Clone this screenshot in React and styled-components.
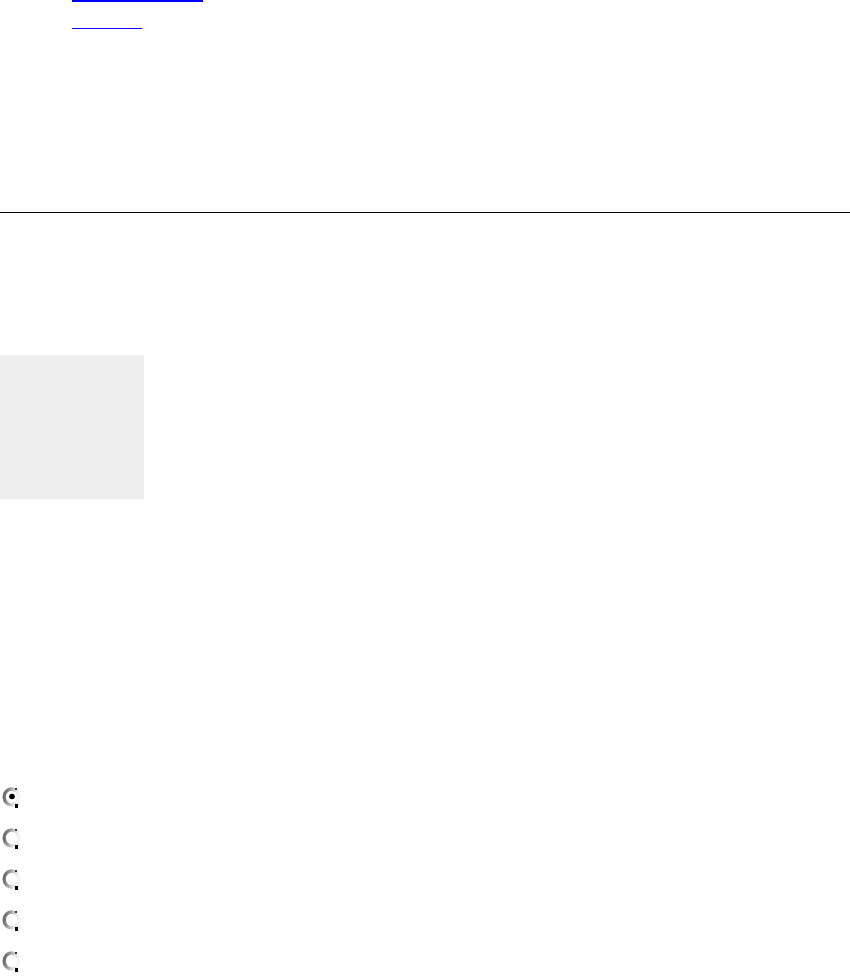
import React from 'react';
import styled, { createGlobalStyle } from 'styled-components';

const GlobalStyle = createGlobalStyle`
    html, body {
        margin: 0;
        padding: 0;
        background: #ffffff;
        font-family: "Liberation Serif", serif;
    }
`;

const Page = styled.div`
    width: 850px;
    height: 976px;
    overflow: hidden;
    display: flex;
    flex-direction: column;
`;

const Nav = styled.nav`
    display: flex;
    flex-direction: column;
    align-items: flex-start;
    gap: 26px;
    padding-left: 72px;
`;

const NavLink = styled.a`
    display: block;
    width: ${({ w }) => w}px;
    height: 0;
    border-bottom: ${({ thick }) => thick}px solid #0000ff;
    color: transparent;
`;

const Rule = styled.hr`
    margin: 183px 0 0;
    border: none;
    height: 1px;
    background: #000000;
    width: 100%;
`;

const Panel = styled.div`
    margin-top: 142px;
    width: 144px;
    height: 144px;
    background: #eeeeee;
`;

const RadioList = styled.div`
    margin-top: 289px;
    display: flex;
    flex-direction: column;
    gap: 23px;
    padding-left: 0;
`;

const RadioRow = styled.label`
    display: flex;
    align-items: center;
    height: 18px;
`;

const Radio = ({ checked }) => (
    <svg width="24" height="24" viewBox="0 0 24 24">
        <defs>
            <linearGradient id="rg" x1="0" y1="0" x2="1" y2="0.25">
                <stop offset="0" stopColor="#5e5e5e" />
                <stop offset="0.4" stopColor="#9a9a9a" />
                <stop offset="0.75" stopColor="#dcdcdc" />
                <stop offset="1" stopColor="#f4f4f4" />
            </linearGradient>
        </defs>
        <ellipse cx="11.5" cy="12" rx="7.3" ry="8" fill="#fff" stroke="url(#rg)" strokeWidth="3.4" />
        <rect x="15" y="3" width="2" height="2" fill="#333" />
        <rect x="15" y="19" width="3" height="4" fill="#000" />
        {checked && <circle cx="12" cy="11.5" r="2.8" fill="#000" />}
    </svg>
);

const radios = [true, false, false, false, false];

export default function App() {
    return (
        <Page>
            <GlobalStyle />
            <Nav>
                <NavLink href="#" w={131} thick={2}>&nbsp;</NavLink>
                <NavLink href="#" w={70} thick={1}>&nbsp;</NavLink>
            </Nav>
            <Rule />
            <Panel />
            <RadioList>
                {radios.map((c, i) => (
                    <RadioRow key={i}>
                        <Radio checked={c} />
                    </RadioRow>
                ))}
            </RadioList>
        </Page>
    );
}
